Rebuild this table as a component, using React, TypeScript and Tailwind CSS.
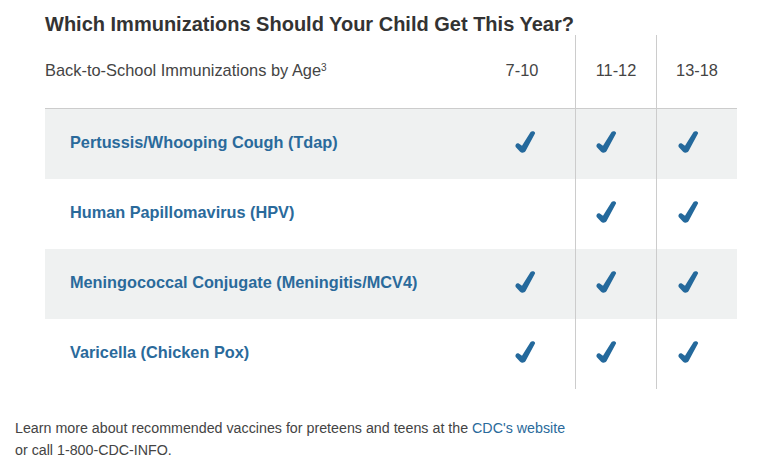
import React from 'react';

const vaccines = [
  { name: 'Pertussis/Whooping Cough (Tdap)', ages: [true, true, true] },
  { name: 'Human Papillomavirus (HPV)', ages: [false, true, true] },
  { name: 'Meningococcal Conjugate (Meningitis/MCV4)', ages: [true, true, true] },
  { name: 'Varicella (Chicken Pox)', ages: [true, true, true] },
];

const Check = () => (
  <svg width="21" height="22" viewBox="0 0 21 22" className="text-[#24699c]">
    <path
      fill="currentColor"
      d="M15.6 1C17.1 -0.3 20.6 0.5 20 2.6L10.6 20C9.5 21.9 6.6 22.3 5.1 20.8L0.9 16.2C-0.6 14.4 1.6 11.2 3.8 12.5L7 14.8Z"
    />
  </svg>
);

// each age column gets its own nudge, the checks don't sit dead centre
const checkNudge = ['mr-[6px]', 'mr-[20px]', 'mr-[18px]'];

const App = () => {
  return (
    <div className="min-h-screen bg-white font-['Liberation_Sans',Arial,sans-serif]">
      <div className="pl-[45px] w-[737px]">
        <h1 className="pt-[14px] text-[20px] leading-[21px] font-bold text-[#333333]">
          Which Immunizations Should Your Child Get This Year?
        </h1>

        <div className="grid grid-cols-[436px_95px_81px_80px] h-[74px] border-b border-[#cccccc] text-[16.4px] leading-[20px] text-[#444444]">
          <div className="flex items-center pb-[3px]">
            <span>
              Back-to-School Immunizations by Age<sup className="text-[10px]">3</sup>
            </span>
          </div>
          <div className="flex items-center justify-center pb-[3px] border-r border-[#cccccc]">
            <span className="mr-[12px]">7-10</span>
          </div>
          <div className="flex items-center justify-center pb-[3px] border-r border-[#cccccc]">
            11-12
          </div>
          <div className="flex items-center justify-center pb-[3px]">
            13-18
          </div>
        </div>

        {vaccines.map((v, i) => (
          <div
            key={v.name}
            className={`grid grid-cols-[436px_95px_81px_80px] h-[70px] ${i % 2 === 0 ? 'bg-[#eff1f1]' : 'bg-white'}`}
          >
            <div className="flex items-center pl-[25px] pb-[4px] text-[16.3px] leading-[20px] font-bold text-[#2a6a9b]">
              {v.name}
            </div>
            {v.ages.map((ok, j) => (
              <div
                key={j}
                className={`flex items-center justify-center pb-[4px] ${j < 2 ? 'border-r border-[#cccccc]' : ''}`}
              >
                {ok && (
                  <span className={checkNudge[j]}>
                    <Check />
                  </span>
                )}
              </div>
            ))}
          </div>
        ))}
      </div>

      <p className="pl-[15px] mt-[28px] text-[14.25px] leading-[22px] text-[#444444]">
        Learn more about recommended vaccines for preteens and teens at the{' '}
        <a href="#" className="text-[#2a6a9b]">
          CDC's website
        </a>
        <br />
        or call 1-800-CDC-INFO.
      </p>
    </div>
  );
};

export default App;
